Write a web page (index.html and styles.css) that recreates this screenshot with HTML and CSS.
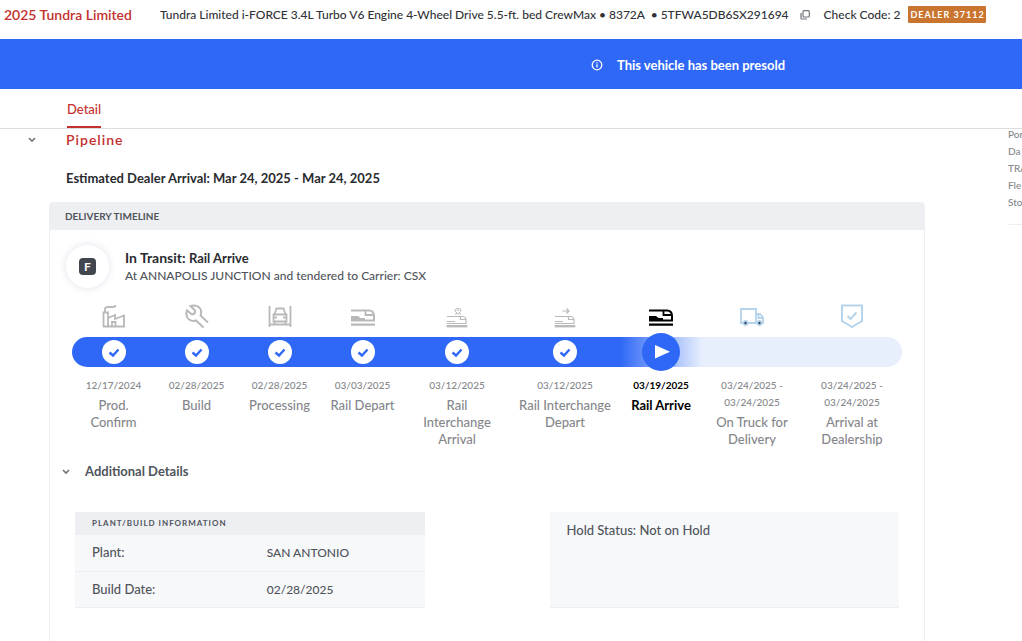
FILE: index.html
```html
<!DOCTYPE html>
<html lang="en">
<head>
<meta charset="UTF-8">
<meta name="viewport" content="width=device-width, initial-scale=1.0">
<title>2025 Tundra Limited</title>
<link rel="stylesheet" href="styles.css">
</head>
<body>

<!-- shared icons -->
<svg class="sprite" aria-hidden="true">
    <symbol id="icon-check" viewBox="0 0 24 24">
        <path d="M7.500 12.500L11 15.500L16.500 9.500" fill="none" stroke="currentColor" stroke-width="2.400"/>
    </symbol>
    <symbol id="icon-chevron" viewBox="0 0 10 10">
        <path d="M2 3L5 6L8 3" fill="none" stroke="currentColor" stroke-width="1.600"/>
    </symbol>
    <symbol id="icon-rail" viewBox="0 0 24 24">
        <path d="M0 6.500h18q5 .3 5 5.500v4.500H0" fill="none" stroke="currentColor" stroke-width="2"/>
        <path d="M14.500 7v4h8" fill="none" stroke="currentColor" stroke-width="1.800"/>
        <path d="M0 12h7l2.500 2H14v3H0zM0 19.500h24v2.300H0z" fill="currentColor"/>
    </symbol>
    <symbol id="icon-rail-small" viewBox="0 0 24 24">
        <path d="M2 12.500h15.500q3.500.3 3.500 3.500v3.500H2" fill="none" stroke="currentColor" stroke-width="1.200"/>
        <path d="M15.500 13v2.500H21M2 17.500h8" fill="none" stroke="currentColor" stroke-width="1.200"/>
        <path d="M2 21.500h20v1.400H2z" fill="currentColor"/>
    </symbol>
</svg>

<header class="header">
    <h1>2025 Tundra Limited</h1>
    <p class="vehicle">Tundra Limited i-FORCE 3.4L Turbo V6 Engine 4-Wheel Drive 5.5-ft. bed CrewMax • 8372A &nbsp;• 5TFWA5DB6SX291694</p>
    <button type="button" class="copy" aria-label="Copy VIN">
        <svg viewBox="0 0 10 10" width="10" height="10" fill="none" stroke="currentColor" stroke-width="1.200">
            <rect x="3" y="0.700" width="6.300" height="6.300" rx="1"/>
            <path d="M1 3v5q0 1 1 1h5"/>
        </svg>
    </button>
    <p class="check-code">Check Code: 2</p>
    <span class="dealer">DEALER 37112</span>
</header>

<div class="banner">
    <svg viewBox="0 0 12 12" width="12" height="12" fill="none" stroke="currentColor">
        <circle cx="6" cy="6" r="4.800" stroke-width="1.300"/>
        <path d="M6 5.300v3.200M6 3.300v1.200" stroke-width="1.300"/>
    </svg>
    <span>This vehicle has been presold</span>
</div>

<nav class="tabs">
    <a href="#pipeline" class="active">Detail</a>
</nav>

<div class="layout">
    <main id="pipeline">
        <div class="section-title">
            <button type="button" class="toggle" aria-label="Toggle pipeline"><svg width="10" height="10"><use href="#icon-chevron"/></svg></button>
            <h2>Pipeline</h2>
        </div>
        <p class="estimate">Estimated Dealer Arrival: Mar 24, 2025 - Mar 24, 2025</p>

        <section class="card">
            <h3 class="card-title">DELIVERY TIMELINE</h3>

            <div class="status">
                <div class="status-icon"><span>F</span></div>
                <div>
                    <p class="status-name">In Transit: <small>Rail Arrive</small></p>
                    <p class="status-text">At ANNAPOLIS JUNCTION and tendered to Carrier: CSX</p>
                </div>
            </div>

            <ol class="timeline">
                <li class="done">
                    <svg class="icon" viewBox="0 0 24 24" fill="none" stroke="currentColor" stroke-width="1.800">
                        <path d="M1.500 22.500V8.500h4.500v14M1 22.500h22M6 14l7-3v4l9-3.500v11M3 8.500V5q0-2 3-2h5q2.500 0 2.500-2M10 22v-4h3.500v4"/>
                    </svg>
                    <div class="bar"><span class="dot"><svg><use href="#icon-check"/></svg></span></div>
                    <time>12/17/2024</time>
                    <p>Prod. Confirm</p>
                </li>
                <li class="done">
                    <svg class="icon" viewBox="0 0 24 24" fill="none" stroke="currentColor" stroke-width="2">
                        <path d="M23 18.500L15.500 11.500Q17.500 6 13.500 2.800Q10 .5 5.500 2L10 6.500Q10.500 10 7 10.500L2 6.500Q0 12 4 15.500Q7.500 18 11 16.500L18.500 23.500"/>
                    </svg>
                    <div class="bar"><span class="dot"><svg><use href="#icon-check"/></svg></span></div>
                    <time>02/28/2025</time>
                    <p>Build</p>
                </li>
                <li class="done">
                    <svg class="icon" viewBox="0 0 24 24" fill="none" stroke="currentColor" stroke-width="1.800">
                        <path d="M1.500 2v21M22.500 2v21M1 20.500h22M5.500 17.500v-7h13v7zM6.500 10.500L8.500 4.500h7l2 6M6 13.500h3M15 13.500h3M6.500 18v2M17.500 18v2"/>
                    </svg>
                    <div class="bar"><span class="dot"><svg><use href="#icon-check"/></svg></span></div>
                    <time>02/28/2025</time>
                    <p>Processing</p>
                </li>
                <li class="done">
                    <svg class="icon"><use href="#icon-rail"/></svg>
                    <div class="bar"><span class="dot"><svg><use href="#icon-check"/></svg></span></div>
                    <time>03/03/2025</time>
                    <p>Rail Depart</p>
                </li>
                <li class="done">
                    <svg class="icon" viewBox="0 0 24 24" fill="none" stroke="currentColor">
                        <use href="#icon-rail-small"/>
                        <path d="M12 9q-2.500-2-2-3t3-1.500q3 0 3 1.500t-2 3M10 9.800h6M12 6.300h2"/>
                    </svg>
                    <div class="bar"><span class="dot"><svg><use href="#icon-check"/></svg></span></div>
                    <time>03/12/2025</time>
                    <p>Rail Interchange Arrival</p>
                </li>
                <li class="done">
                    <svg class="icon" viewBox="0 0 24 24" fill="none" stroke="currentColor">
                        <use href="#icon-rail-small"/>
                        <path d="M9.500 7h6.500M13.500 4.500L16 7l-2.500 2.500" stroke-width="1.200"/>
                    </svg>
                    <div class="bar"><span class="dot"><svg><use href="#icon-check"/></svg></span></div>
                    <time>03/12/2025</time>
                    <p>Rail Interchange Depart</p>
                </li>
                <li class="current">
                    <svg class="icon"><use href="#icon-rail"/></svg>
                    <div class="bar"><span class="dot"><svg viewBox="0 0 38 38"><path d="M13 12v13.500L28 18.700z" fill="currentColor"/></svg></span></div>
                    <time>03/19/2025</time>
                    <p>Rail Arrive</p>
                </li>
                <li>
                    <svg class="icon" viewBox="0 0 24 24" fill="none" stroke="currentColor" stroke-width="1.800">
                        <path d="M3 19H1V5h15v14H8M16 10h4l3 3.500V19h-1M18 19h-2M18.500 10v4H23"/>
                        <circle cx="5.500" cy="19" r="2"/>
                        <circle cx="19.500" cy="19" r="2"/>
                        <g class="hub"><circle cx="5.500" cy="19" r="1.200"/><circle cx="19.500" cy="19" r="1.200"/></g>
                    </svg>
                    <div class="bar"></div>
                    <time>03/24/2025 - 03/24/2025</time>
                    <p>On Truck for Delivery</p>
                </li>
                <li>
                    <svg class="icon" viewBox="0 0 24 24" fill="none" stroke="currentColor" stroke-width="2">
                        <path d="M2 1.500h20V17L12 23L2 17zM7.500 12l3 3L16.500 8.500"/>
                    </svg>
                    <div class="bar"></div>
                    <time>03/24/2025 - 03/24/2025</time>
                    <p>Arrival at Dealership</p>
                </li>
            </ol>

            <div class="details-title">
                <button type="button" class="toggle" aria-label="Toggle additional details"><svg width="10" height="10"><use href="#icon-chevron"/></svg></button>
                <h3>Additional Details</h3>
            </div>

            <div class="details">
                <table>
                    <thead>
                        <tr><th colspan="2">PLANT/BUILD INFORMATION</th></tr>
                    </thead>
                    <tbody>
                        <tr><td>Plant:</td><td class="value">SAN ANTONIO</td></tr>
                        <tr><td>Build Date:</td><td class="value">02/28/2025</td></tr>
                    </tbody>
                </table>
                <div class="hold">Hold Status: Not on Hold</div>
            </div>
        </section>
    </main>

    <aside class="side">
        <ul>
            <li>Por</li>
            <li>Da</li>
            <li>TRA</li>
            <li>Fle</li>
            <li>Sto</li>
        </ul>
    </aside>
</div>

</body>
</html>
```
FILE: styles.css
```css
* {
    box-sizing: border-box;
}

body {
    font-family: Lato, "Open Sans", sans-serif;
    font-size: 13px;
    font-weight: 500;
    line-height: 17px;
    color: #50545b;
    background-color: #fff;
    margin: 0;
    overflow: hidden;
}

h1, h2, h3, p, ul, ol {
    margin: 0;
    padding: 0;
}

ul, ol {
    list-style: none;
}

button {
    display: flex;
    padding: 0;
    border: none;
    background: none;
    cursor: pointer;
}

.sprite {
    position: absolute;
    width: 0;
    height: 0;
}

.header {
    display: flex;
    align-items: center;
    height: 39px;
    padding: 0 4px 10px;
    font-size: 12px;
    color: #303236;
    white-space: nowrap;
}

.header h1 {
    font-size: 14px;
    font-weight: 600;
    color: #c3302d;
    margin-right: 28px;
}

.copy {
    color: #70747a;
    margin: 0 14px 0 11px;
}

.dealer {
    margin-left: 8px;
    padding: 0 1px 0 2px;
    border-radius: 1px;
    background-color: #c9742f;
    color: #fff;
    font-size: 9px;
    font-weight: 700;
    letter-spacing: 1px;
}

.banner {
    display: flex;
    align-items: center;
    justify-content: center;
    gap: 14px;
    height: 50px;
    padding: 2px 0 0 354px;
    background-color: #2f68f7;
    color: #fff;
    font-weight: 700;
}

.tabs {
    display: flex;
    height: 40px;
    padding-left: 67px;
    border-bottom: 1px solid #dcdde0;
}

.tabs a {
    padding-top: 12px;
    border-bottom: 2px solid #c3302d;
    color: #c3302d;
    text-decoration: none;
}

.layout {
    display: grid;
    grid-template-columns: 1fr 14px;
}

main {
    padding: 2px 83px 0 49px;
}

.section-title {
    display: flex;
    align-items: center;
    gap: 29px;
    margin-left: -22px;
}

.section-title h2 {
    font-size: 14px;
    font-weight: 600;
    line-height: 18px;
    letter-spacing: 1px;
    color: #c3302d;
}

.toggle {
    color: #70747a;
}

.estimate {
    margin: 21px 0 15px 17px;
    font-weight: 700;
    color: #292b2f;
}

.card {
    min-height: 460px;
    border: 1px solid #eeeff2;
    border-radius: 4px;
}

.card-title {
    padding: 5px 15px;
    background-color: #edeff3;
    font-size: 10px;
    font-weight: 700;
    line-height: 17px;
}

.status {
    display: flex;
    align-items: center;
    gap: 16px;
    padding: 15px 16px 0;
}

.status-icon {
    display: flex;
    align-items: center;
    justify-content: center;
    width: 43px;
    height: 43px;
    border-radius: 50%;
    box-shadow: 0 0 8px #dfe2ea;
}

.status-icon span {
    width: 17px;
    height: 17px;
    border-radius: 4px;
    background-color: #41464f;
    color: #fff;
    font-size: 12px;
    font-weight: 700;
    text-align: center;
}

.status-name {
    font-size: 14px;
    font-weight: 700;
    color: #292b2f;
}

.status-name small {
    font-size: 13px;
}

.status-text {
    font-size: 12px;
}

.timeline {
    display: grid;
    grid-template-columns: repeat(4, 83fr) 106fr 110fr 82fr 100fr 100fr;
    margin: 16px 22px 0;
    text-align: center;
    color: #85878b;
}

.timeline li {
    display: flex;
    flex-direction: column;
    align-items: center;
}

.icon {
    width: 24px;
    height: 24px;
    margin-bottom: 9px;
    color: #b9b9b9;
}

.bar {
    display: flex;
    align-items: center;
    justify-content: center;
    width: 100%;
    height: 30px;
    margin-bottom: 10px;
    background-color: #e7effd;
}

.timeline li:first-child .bar {
    border-radius: 15px 0 0 15px;
}

.timeline li:last-child .bar {
    border-radius: 0 15px 15px 0;
}

.done .bar {
    background-color: #2f68f7;
}

.current .bar {
    background: linear-gradient(to right, #2f68f7, #e7effd);
}

.dot {
    display: flex;
    flex: none;
    width: 24px;
    height: 24px;
    border-radius: 50%;
    background-color: #fff;
    color: #2f68f7;
}

.current .dot {
    width: 38px;
    height: 38px;
    background-color: #2f68f7;
    color: #fff;
}

.timeline time {
    max-width: 80px;
    margin-bottom: 3px;
    font-size: 10px;
}

.timeline p {
    padding: 0 8px;
}

.timeline .current {
    font-weight: 700;
    color: #000;
}

.current p {
    white-space: nowrap;
}

.current .icon {
    color: #000;
}

.timeline li:nth-child(n+8) .icon {
    color: #b5d3ea;
}

.hub {
    fill: #26415c;
    stroke: none;
}

.details-title {
    display: flex;
    align-items: center;
    gap: 14px;
    margin: 15px 11px 32px;
}

.details-title h3 {
    font-size: 13px;
    font-weight: 700;
}

.details {
    display: grid;
    grid-template-columns: 1fr 1fr;
    gap: 125px;
    padding: 0 25px;
}

table {
    width: 100%;
    border-collapse: collapse;
    table-layout: fixed;
    background-color: #f7f8fa;
}

th {
    height: 23px;
    padding: 0 17px;
    background-color: #edeff3;
    font-size: 8px;
    font-weight: 700;
    letter-spacing: 1px;
    text-align: left;
}

td {
    height: 36px;
    padding: 0 17px;
    border-bottom: 1px solid #eceef1;
}

.value {
    font-size: 12px;
}

.hold {
    padding: 10px 17px;
    border-bottom: 1px solid #eceef1;
    background-color: #f7f8fa;
}

.side {
    overflow: hidden;
    font-size: 10px;
    color: #85878b;
    white-space: nowrap;
}

.side ul {
    margin-top: -3px;
    padding-bottom: 13px;
    border-bottom: 1px solid #eceef1;
}
```
